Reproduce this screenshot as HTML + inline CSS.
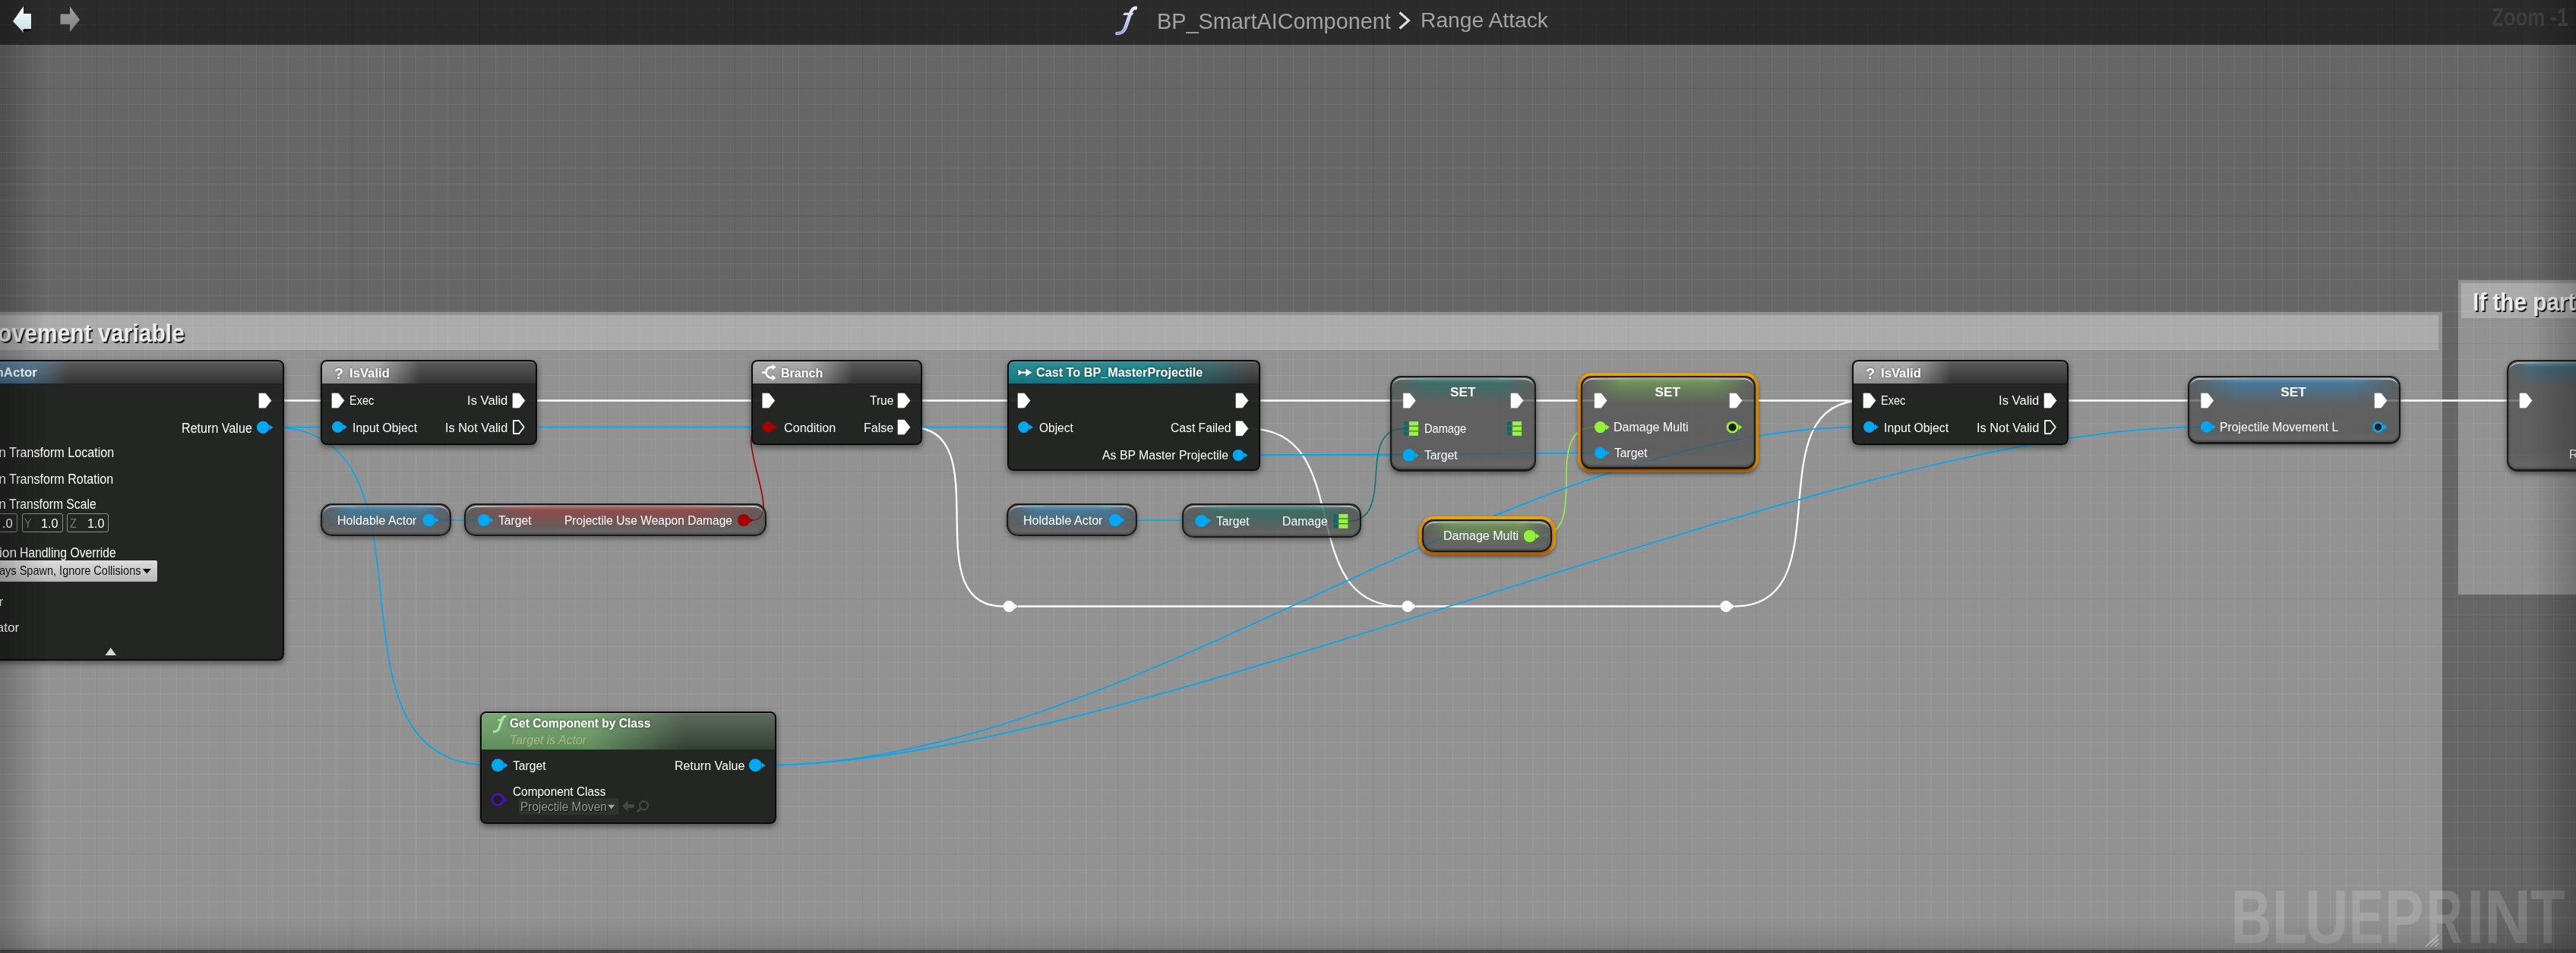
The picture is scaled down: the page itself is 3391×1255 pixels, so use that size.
<!DOCTYPE html><html><head><meta charset="utf-8"><style>*{box-sizing:border-box}
html,body{margin:0;padding:0}
body{width:3391px;height:1255px;overflow:hidden;position:relative;background:#666;font-family:"Liberation Sans",sans-serif;color:#fff}
.layer{position:absolute;left:0;top:0;overflow:visible}
.t{position:absolute;white-space:nowrap}
#txt{position:absolute;left:0;top:0;width:3391px;height:1255px;will-change:transform}
#grid{position:absolute;left:0;top:0;width:3391px;height:1255px;
background-image:
 linear-gradient(to right, rgba(0,0,0,.16) 1px, transparent 1px),
 linear-gradient(to bottom, rgba(0,0,0,.16) 1px, transparent 1px),
 linear-gradient(to right, rgba(255,255,255,.06) 1px, transparent 1px),
 linear-gradient(to bottom, rgba(255,255,255,.06) 1px, transparent 1px);
background-size:168px 168px,168px 168px,21px 21px,21px 21px;
background-position:127px 0,0 116px,1px 0,0 11px;}
#vig{position:absolute;left:0;top:0;width:3391px;height:1255px;
background:
 linear-gradient(to right, rgba(0,0,0,.22), rgba(0,0,0,0) 60px),
 linear-gradient(to left, rgba(0,0,0,.22), rgba(0,0,0,0) 60px),
 linear-gradient(to top, rgba(0,0,0,.28) 0, rgba(0,0,0,.28) 5px, rgba(0,0,0,.12) 6px, rgba(0,0,0,0) 45px);}
#hdr{position:absolute;left:0;top:0;width:3391px;height:59px;background:rgba(0,0,0,.58)}
.cmt{position:absolute;background:rgba(255,255,255,.29)}
.cmth{position:absolute;background:rgba(255,255,255,.23)}
.dn{position:absolute;background:rgba(31,33,31,.96);border:2px solid #0b0b0b;border-radius:8px;box-shadow:0 3px 8px rgba(0,0,0,.5)}
.dh{position:absolute;border-radius:6px 6px 0 0}
.dg{position:absolute;border-radius:6px 6px 0 0;background:linear-gradient(to bottom, rgba(255,255,255,.28) 0, rgba(255,255,255,.10) 2px, rgba(255,255,255,.05) 45%, rgba(0,0,0,.08) 100%)}
.vn{position:absolute;background:linear-gradient(to bottom, rgba(74,74,74,.7) 0, rgba(74,74,74,.7) 85%, rgba(88,88,88,.72) 100%);border:2px solid #1a1a1a;border-bottom-width:3px;box-shadow:0 3px 7px rgba(0,0,0,.45), inset 0 -2px 3px rgba(0,0,0,.3)}
.vg{position:absolute}
.pn{position:absolute;background:linear-gradient(to bottom, rgba(70,70,70,.7) 0, rgba(74,74,74,.7) 70%, rgba(92,92,92,.72) 100%);border:2px solid #1a1a1a;box-shadow:0 3px 6px rgba(0,0,0,.4), inset 0 -2px 3px rgba(0,0,0,.3)}
.hl{position:absolute;border-top:2px solid rgba(255,255,255,.7);-webkit-mask-image:linear-gradient(to right, rgba(0,0,0,1) 0, rgba(0,0,0,.5) 12%, rgba(0,0,0,.15) 30%, rgba(0,0,0,.15) 70%, rgba(0,0,0,.5) 88%, rgba(0,0,0,1) 100%)}
.pg{position:absolute;-webkit-mask-image:linear-gradient(to right, rgba(0,0,0,0) 0, rgba(0,0,0,1) 22%, rgba(0,0,0,1) 78%, rgba(0,0,0,0) 100%)}
.sel{position:absolute;border:4.5px solid #eb9400;border-top-color:#f2a800;border-bottom-color:#e37800;box-shadow:0 2px 5px rgba(0,0,0,.35)}
.vbox{position:absolute;border:1.5px solid #8c8c8c;border-radius:3px}
.dd{position:absolute;background:linear-gradient(to bottom,#dcdcdc,#b9b9b9);border-radius:2px}
.cdd{position:absolute;background:rgba(255,255,255,.06);border-radius:3px}
</style></head><body>
<div id="grid"></div>
<div class="cmt" style="left:0;top:411px;width:3215px;height:840px"></div>
<div class="cmth" style="left:0;top:415px;width:3210px;height:46px"></div>
<div class="cmt" style="left:3236px;top:369px;width:200px;height:414px"></div>
<div class="cmth" style="left:3240px;top:373px;width:200px;height:46px"></div>

<svg class="layer" width="3391" height="1255" viewBox="0 0 3391 1255"><line x1="357" y1="527.5" x2="437" y2="527.5" stroke="#fff" stroke-width="2.3"/><line x1="691" y1="527.5" x2="1003.8" y2="527.5" stroke="#fff" stroke-width="2.3"/><line x1="1198" y1="527.5" x2="1340" y2="527.5" stroke="#fff" stroke-width="2.3"/><line x1="1643" y1="527.5" x2="1847.4" y2="527.5" stroke="#fff" stroke-width="2.3"/><line x1="2004" y1="527.5" x2="2099.2" y2="527.5" stroke="#fff" stroke-width="2.3"/><line x1="2292.5" y1="527.5" x2="2438" y2="527.5" stroke="#fff" stroke-width="2.3"/><line x1="2707" y1="527.5" x2="2897.7" y2="527.5" stroke="#fff" stroke-width="2.3"/><line x1="3142.5" y1="527.5" x2="3317" y2="527.5" stroke="#fff" stroke-width="2.3"/><path d="M1198.4,562.5 C1317.9,562.5 1201.3,798.5 1320.8,798.5" fill="none" stroke="#ffffff" stroke-width="2.3" opacity="1.0"/><line x1="1339.6" y1="798.5" x2="1845.6" y2="798.5" stroke="#fff" stroke-width="2.3"/><path d="M1643.0,564.3 C1788.6,564.3 1700.0,798.5 1845.6,798.5" fill="none" stroke="#ffffff" stroke-width="2.3" opacity="1.0"/><line x1="1864" y1="798.5" x2="2264.6" y2="798.5" stroke="#fff" stroke-width="2.3"/><path d="M2283.4,798.5 C2430.3,798.5 2306.1,527.5 2453.0,527.5" fill="none" stroke="#ffffff" stroke-width="2.3" opacity="1.0"/><line x1="356" y1="562.5" x2="1340" y2="562.5" stroke="#00a8f3" stroke-width="1.7"/><path d="M356.0,562.5 C601.4,562.5 401.4,1007.8 646.8,1007.8" fill="none" stroke="#00a8f3" stroke-width="1.7" opacity="1.0"/><line x1="576" y1="685" x2="629" y2="685" stroke="#00a8f3" stroke-width="1.7"/><path d="M990.0,685.0 C1035.4,685.0 958.4,562.5 1003.8,562.5" fill="none" stroke="#a50000" stroke-width="1.6" opacity="1.0"/><line x1="1642" y1="599.4" x2="1847" y2="599.4" stroke="#00a8f3" stroke-width="1.7"/><path d="M1642.0,599.4 C1795.3,599.4 1945.7,596.4 2099.0,596.4" fill="none" stroke="#00a8f3" stroke-width="1.7" opacity="1.0"/><line x1="1478" y1="685" x2="1573.5" y2="685" stroke="#00a8f3" stroke-width="1.7"/><path d="M1774.3,686.5 C1839.5,686.5 1782.8,564.5 1848.0,564.5" fill="none" stroke="#0b7a72" stroke-width="1.7" opacity="1.0"/><path d="M2024.7,706.0 C2097.3,706.0 2026.4,562.6 2099.0,562.6" fill="none" stroke="#93f23c" stroke-width="1.6" opacity="1.0"/><path d="M1005.7,1007.8 C1487.5,1007.8 1971.2,562.3 2453.0,562.3" fill="none" stroke="#00a8f3" stroke-width="1.7" opacity="1.0"/><path d="M1005.7,1007.8 C1487.5,1007.8 2414.2,562.3 2896.0,562.3" fill="none" stroke="#00a8f3" stroke-width="1.7" opacity="1.0"/></svg>
<div class="dn" style="left:-40px;top:474px;width:413.5px;height:395.70000000000005px"></div><div class="dh" style="left:-38px;top:476px;width:409.5px;height:29px;background:linear-gradient(to right, rgba(80,130,170,.75) 0px, rgba(80,130,170,.75) 72px, rgba(60,60,60,0) 130px), linear-gradient(to bottom,#454545,#383838)"></div><div class="dg" style="left:-38px;top:476px;width:409.5px;height:29px"></div><div class="vbox" style="left:-20px;top:676px;width:42.7px;height:25px"></div><div class="vbox" style="left:29.1px;top:676px;width:53.800000000000004px;height:25px"></div><div class="vbox" style="left:88.3px;top:676px;width:54.7px;height:25px"></div><div class="dd" style="left:-20px;top:738px;width:227px;height:28px"></div><div class="dn" style="left:422px;top:474px;width:285px;height:112.39999999999998px"></div><div class="dh" style="left:424px;top:476px;width:281px;height:29px;background:linear-gradient(to right, rgba(175,175,175,.85) 0px, rgba(175,175,175,.85) 71px, rgba(60,60,60,0) 129px), linear-gradient(to bottom,#454545,#383838)"></div><div class="dg" style="left:424px;top:476px;width:281px;height:29px"></div><div class="dn" style="left:2438px;top:474px;width:285px;height:112.39999999999998px"></div><div class="dh" style="left:2440px;top:476px;width:281px;height:29px;background:linear-gradient(to right, rgba(175,175,175,.85) 0px, rgba(175,175,175,.85) 71px, rgba(60,60,60,0) 129px), linear-gradient(to bottom,#454545,#383838)"></div><div class="dg" style="left:2440px;top:476px;width:281px;height:29px"></div><div class="dn" style="left:989px;top:474px;width:225px;height:112.39999999999998px"></div><div class="dh" style="left:991px;top:476px;width:221px;height:29px;background:linear-gradient(to right, rgba(175,175,175,.85) 0px, rgba(175,175,175,.85) 73px, rgba(60,60,60,0) 132px), linear-gradient(to bottom,#454545,#383838)"></div><div class="dg" style="left:991px;top:476px;width:221px;height:29px"></div><div class="dn" style="left:1325.5px;top:474px;width:333.0px;height:145.60000000000002px"></div><div class="dh" style="left:1327.5px;top:476px;width:329.0px;height:29px;background:linear-gradient(to right, rgba(20,130,140,.95) 0px, rgba(20,130,140,.95) 176px, rgba(60,60,60,0) 320px), linear-gradient(to bottom,#454545,#383838)"></div><div class="dg" style="left:1327.5px;top:476px;width:329.0px;height:29px"></div><div class="vn" style="left:1829.5px;top:495.3px;width:192.9000000000001px;height:126.19999999999999px;border-radius:14px"></div><div class="pg" style="left:1831.5px;top:497.3px;width:188.9000000000001px;height:36px;border-radius:12px 12px 0 0;background:linear-gradient(to bottom, rgba(120,174,168,0.60) 0, rgba(30,120,110,0.55) 22%, rgba(30,120,110,0.30) 55%, rgba(30,120,110,0) 100%)"></div><div class="hl" style="left:1832.5px;top:497.8px;width:186.9000000000001px;height:18px;border-radius:12px 12px 0 0"></div><div class="sel" style="left:2076.9px;top:490.8px;width:238.19999999999982px;height:131.49999999999994px;border-radius:18px"></div><div class="vn" style="left:2081.4px;top:495.3px;width:229.19999999999982px;height:122.49999999999994px;border-radius:14px"></div><div class="pg" style="left:2083.4px;top:497.3px;width:225.19999999999982px;height:36px;border-radius:12px 12px 0 0;background:linear-gradient(to bottom, rgba(174,210,150,0.60) 0, rgba(120,180,80,0.55) 22%, rgba(120,180,80,0.30) 55%, rgba(120,180,80,0) 100%)"></div><div class="hl" style="left:2084.4px;top:497.8px;width:223.19999999999982px;height:18px;border-radius:12px 12px 0 0"></div><div class="vn" style="left:2880px;top:495.3px;width:280px;height:89.69999999999999px;border-radius:14px"></div><div class="pg" style="left:2882px;top:497.3px;width:276px;height:36px;border-radius:12px 12px 0 0;background:linear-gradient(to bottom, rgba(132,186,222,0.60) 0, rgba(50,140,200,0.55) 22%, rgba(50,140,200,0.30) 55%, rgba(50,140,200,0) 100%)"></div><div class="hl" style="left:2883px;top:497.8px;width:274px;height:18px;border-radius:12px 12px 0 0"></div><div class="vn" style="left:3299.6px;top:474.3px;width:150.4000000000001px;height:146.7px;border-radius:14px"></div><div class="pg" style="left:3301.6px;top:476.3px;width:146.4000000000001px;height:36px;border-radius:12px 12px 0 0;background:linear-gradient(to bottom, rgba(126,168,186,0.60) 0, rgba(40,110,140,0.55) 22%, rgba(40,110,140,0.30) 55%, rgba(40,110,140,0) 100%)"></div><div class="hl" style="left:3302.6px;top:476.8px;width:144.4000000000001px;height:18px;border-radius:12px 12px 0 0"></div><div class="pn" style="left:422px;top:663.2px;width:172.20000000000005px;height:43.09999999999991px;border-radius:15px"></div><div class="pg" style="left:424px;top:665.2px;width:168.20000000000005px;height:34.5px;border-radius:13px 13px 0 0;background:linear-gradient(to bottom, rgba(132,186,222,0.60) 0, rgba(50,140,200,0.55) 22%, rgba(50,140,200,0.30) 55%, rgba(50,140,200,0) 100%)"></div><div class="hl" style="left:425px;top:665.7px;width:166.20000000000005px;height:17px;border-radius:13px 13px 0 0"></div><div class="pn" style="left:610.8px;top:663.2px;width:397.80000000000007px;height:43.09999999999991px;border-radius:15px"></div><div class="pg" style="left:612.8px;top:665.2px;width:393.80000000000007px;height:34.5px;border-radius:13px 13px 0 0;background:linear-gradient(to bottom, rgba(210,138,138,0.60) 0, rgba(180,60,60,0.55) 22%, rgba(180,60,60,0.30) 55%, rgba(180,60,60,0) 100%)"></div><div class="hl" style="left:613.8px;top:665.7px;width:391.80000000000007px;height:17px;border-radius:13px 13px 0 0"></div><div class="pn" style="left:1325.1px;top:663.3px;width:172.10000000000014px;height:43.10000000000002px;border-radius:15px"></div><div class="pg" style="left:1327.1px;top:665.3px;width:168.10000000000014px;height:34.5px;border-radius:13px 13px 0 0;background:linear-gradient(to bottom, rgba(132,186,222,0.60) 0, rgba(50,140,200,0.55) 22%, rgba(50,140,200,0.30) 55%, rgba(50,140,200,0) 100%)"></div><div class="hl" style="left:1328.1px;top:665.8px;width:166.10000000000014px;height:17px;border-radius:13px 13px 0 0"></div><div class="pn" style="left:1556px;top:663.3px;width:236.4000000000001px;height:45.200000000000045px;border-radius:15px"></div><div class="pg" style="left:1558px;top:665.3px;width:232.4000000000001px;height:36.2px;border-radius:13px 13px 0 0;background:linear-gradient(to bottom, rgba(120,174,168,0.60) 0, rgba(30,120,110,0.55) 22%, rgba(30,120,110,0.30) 55%, rgba(30,120,110,0) 100%)"></div><div class="hl" style="left:1559px;top:665.8px;width:230.4000000000001px;height:17px;border-radius:13px 13px 0 0"></div><div class="sel" style="left:1867.5px;top:679.8px;width:180px;height:51.5px;border-radius:19.5px"></div><div class="pn" style="left:1872px;top:684.3px;width:171px;height:42.5px;border-radius:15px"></div><div class="pg" style="left:1874px;top:686.3px;width:167px;height:34.0px;border-radius:13px 13px 0 0;background:linear-gradient(to bottom, rgba(174,210,150,0.60) 0, rgba(120,180,80,0.55) 22%, rgba(120,180,80,0.30) 55%, rgba(120,180,80,0) 100%)"></div><div class="hl" style="left:1875px;top:686.8px;width:165px;height:17px;border-radius:13px 13px 0 0"></div><div class="dn" style="left:632.3px;top:936.6px;width:389.4000000000001px;height:148.69999999999993px"></div><div class="dh" style="left:634.3px;top:938.6px;width:385.4000000000001px;height:48.4px;background:linear-gradient(to right, rgba(110,160,105,.9) 0px, rgba(110,160,105,.9) 146px, rgba(60,60,60,0) 265px), linear-gradient(to bottom,#4a5a48,#36443a)"></div><div class="dg" style="left:634.3px;top:938.6px;width:385.4000000000001px;height:48.4px"></div><div class="cdd" style="left:683.3px;top:1051.3px;width:130.3px;height:22px"></div>
<svg class="layer" width="3391" height="1255" viewBox="0 0 3391 1255"><defs><filter id="sh" x="-50%" y="-50%" width="200%" height="200%"><feDropShadow dx="0" dy="0" stdDeviation="1" flood-color="#000" flood-opacity=".8"/></filter></defs><path d="M341.0,518.1 L349.5,518.1 L357.0,527.6 L349.5,537.1 L341.0,537.1 Z" fill="#fff" stroke="#fff" stroke-width="0.6" stroke-linejoin="round"/><circle cx="346.2" cy="562.8" r="8.2" fill="#00a8f3"/><path d="M354.5,559.2 L359.3,562.8 L354.5,566.4 Z" fill="#00a8f3"/><path d="M187.7,749 L199,749 L193.3,755.4 Z" fill="#111"/><path d="M138.5,863 L153,863 L145.75,853 Z" fill="#d8d8d8"/><path d="M437.0,518.0 L445.5,518.0 L453.0,527.5 L445.5,537.0 L437.0,537.0 Z" fill="#fff" stroke="#fff" stroke-width="0.6" stroke-linejoin="round"/><circle cx="444.5" cy="562.3" r="7.5" fill="#00a8f3"/><path d="M452.0,558.7 L456.8,562.3 L452.0,565.9 Z" fill="#00a8f3"/><path d="M675.0,518.0 L683.5,518.0 L691.0,527.5 L683.5,537.0 L675.0,537.0 Z" fill="#fff" stroke="#fff" stroke-width="0.6" stroke-linejoin="round"/><path d="M676.0,554.0 L683.2,554.0 L689.8,562.5 L683.2,571.0 L676.0,571.0 Z" fill="none" stroke="#fff" stroke-width="1.8" stroke-linejoin="round"/><path d="M2453.0,518.0 L2461.5,518.0 L2469.0,527.5 L2461.5,537.0 L2453.0,537.0 Z" fill="#fff" stroke="#fff" stroke-width="0.6" stroke-linejoin="round"/><circle cx="2460.5" cy="562.3" r="7.5" fill="#00a8f3"/><path d="M2468.0,558.7 L2472.8,562.3 L2468.0,565.9 Z" fill="#00a8f3"/><path d="M2691.0,518.0 L2699.5,518.0 L2707.0,527.5 L2699.5,537.0 L2691.0,537.0 Z" fill="#fff" stroke="#fff" stroke-width="0.6" stroke-linejoin="round"/><path d="M2692.0,554.0 L2699.2,554.0 L2705.8,562.5 L2699.2,571.0 L2692.0,571.0 Z" fill="none" stroke="#fff" stroke-width="1.8" stroke-linejoin="round"/><path d="M1003.8,518.0 L1012.3,518.0 L1019.8,527.5 L1012.3,537.0 L1003.8,537.0 Z" fill="#fff" stroke="#fff" stroke-width="0.6" stroke-linejoin="round"/><circle cx="1011.3" cy="562.5" r="7.5" fill="#a50000"/><path d="M1018.8,558.9 L1023.6,562.5 L1018.8,566.1 Z" fill="#a50000"/><path d="M1182.0,518.0 L1190.5,518.0 L1198.0,527.5 L1190.5,537.0 L1182.0,537.0 Z" fill="#fff" stroke="#fff" stroke-width="0.6" stroke-linejoin="round"/><path d="M1182.0,553.0 L1190.5,553.0 L1198.0,562.5 L1190.5,572.0 L1182.0,572.0 Z" fill="#fff" stroke="#fff" stroke-width="0.6" stroke-linejoin="round"/><path d="M1340.0,518.0 L1348.5,518.0 L1356.0,527.5 L1348.5,537.0 L1340.0,537.0 Z" fill="#fff" stroke="#fff" stroke-width="0.6" stroke-linejoin="round"/><path d="M1627.0,518.0 L1635.5,518.0 L1643.0,527.5 L1635.5,537.0 L1627.0,537.0 Z" fill="#fff" stroke="#fff" stroke-width="0.6" stroke-linejoin="round"/><circle cx="1347.7" cy="562.5" r="7.5" fill="#00a8f3"/><path d="M1355.2,558.9 L1360.0,562.5 L1355.2,566.1 Z" fill="#00a8f3"/><path d="M1627.0,554.8 L1635.5,554.8 L1643.0,564.3 L1635.5,573.8 L1627.0,573.8 Z" fill="#fff" stroke="#fff" stroke-width="0.6" stroke-linejoin="round"/><circle cx="1630.1" cy="599.4" r="7.5" fill="#00a8f3"/><path d="M1637.6,595.8 L1642.4,599.4 L1637.6,603.0 Z" fill="#00a8f3"/><path d="M1847.4,518.1 L1855.9,518.1 L1863.4,527.6 L1855.9,537.1 L1847.4,537.1 Z" fill="#fff" stroke="#fff" stroke-width="0.6" stroke-linejoin="round"/><path d="M1989.0,518.1 L1997.5,518.1 L2005.0,527.6 L1997.5,537.1 L1989.0,537.1 Z" fill="#fff" stroke="#fff" stroke-width="0.6" stroke-linejoin="round"/><rect x="1848.0" y="555.0" width="5.5" height="5.4" fill="#0c6a66"/><rect x="1855.0" y="555.0" width="12" height="5.4" fill="#94f53c"/><rect x="1848.0" y="561.7" width="5.5" height="5.4" fill="#0c6a66"/><rect x="1855.0" y="561.7" width="12" height="5.4" fill="#94f53c"/><rect x="1848.0" y="568.4" width="5.5" height="5.4" fill="#0c6a66"/><rect x="1855.0" y="568.4" width="12" height="5.4" fill="#94f53c"/><rect x="1984.0" y="555.0" width="5.5" height="5.4" fill="#0c6a66"/><rect x="1991.0" y="555.0" width="12" height="5.4" fill="#94f53c"/><rect x="1984.0" y="561.7" width="5.5" height="5.4" fill="#0c6a66"/><rect x="1991.0" y="561.7" width="12" height="5.4" fill="#94f53c"/><rect x="1984.0" y="568.4" width="5.5" height="5.4" fill="#0c6a66"/><rect x="1991.0" y="568.4" width="12" height="5.4" fill="#94f53c"/><circle cx="1854.8" cy="599.5" r="8.2" fill="#00a8f3"/><path d="M1863.1,595.9 L1867.9,599.5 L1863.1,603.1 Z" fill="#00a8f3"/><path d="M2099.2,518.1 L2107.7,518.1 L2115.2,527.6 L2107.7,537.1 L2099.2,537.1 Z" fill="#fff" stroke="#fff" stroke-width="0.6" stroke-linejoin="round"/><path d="M2277.0,518.1 L2285.5,518.1 L2293.0,527.6 L2285.5,537.1 L2277.0,537.1 Z" fill="#fff" stroke="#fff" stroke-width="0.6" stroke-linejoin="round"/><circle cx="2106.5" cy="562.6" r="7.5" fill="#93f23c"/><path d="M2114.0,559.0 L2118.8,562.6 L2114.0,566.2 Z" fill="#93f23c"/><circle cx="2280.5" cy="562.6" r="6.5" fill="#1e1e1e" stroke="#93f23c" stroke-width="2.8"/><path d="M2288.5,559.0 L2293.3,562.6 L2288.5,566.2 Z" fill="#93f23c"/><circle cx="2106.5" cy="596.4" r="7.5" fill="#00a8f3"/><path d="M2114.0,592.8 L2118.8,596.4 L2114.0,600.0 Z" fill="#00a8f3"/><path d="M2897.7,518.0 L2906.2,518.0 L2913.7,527.5 L2906.2,537.0 L2897.7,537.0 Z" fill="#fff" stroke="#fff" stroke-width="0.6" stroke-linejoin="round"/><path d="M3126.0,518.0 L3134.5,518.0 L3142.0,527.5 L3134.5,537.0 L3126.0,537.0 Z" fill="#fff" stroke="#fff" stroke-width="0.6" stroke-linejoin="round"/><circle cx="2904.5" cy="562.3" r="7.5" fill="#00a8f3"/><path d="M2912.0,558.7 L2916.8,562.3 L2912.0,565.9 Z" fill="#00a8f3"/><circle cx="3130.5" cy="562.3" r="6.0" fill="#1e1e1e" stroke="#00a8f3" stroke-width="2.8"/><path d="M3138.0,558.7 L3142.8,562.3 L3138.0,565.9 Z" fill="#00a8f3"/><path d="M3317.0,518.0 L3325.5,518.0 L3333.0,527.5 L3325.5,537.0 L3317.0,537.0 Z" fill="#fff" stroke="#fff" stroke-width="0.6" stroke-linejoin="round"/><circle cx="564.8" cy="685.0" r="8.0" fill="#00a8f3"/><path d="M572.8,681.4 L577.6,685.0 L572.8,688.6 Z" fill="#00a8f3"/><circle cx="637.0" cy="685.0" r="8.0" fill="#00a8f3"/><path d="M645.0,681.4 L649.8,685.0 L645.0,688.6 Z" fill="#00a8f3"/><circle cx="979.0" cy="685.0" r="8.0" fill="#a50000"/><path d="M987.0,681.4 L991.8,685.0 L987.0,688.6 Z" fill="#a50000"/><circle cx="1468.0" cy="685.0" r="8.0" fill="#00a8f3"/><path d="M1476.0,681.4 L1480.8,685.0 L1476.0,688.6 Z" fill="#00a8f3"/><circle cx="1581.5" cy="686.0" r="8.0" fill="#00a8f3"/><path d="M1589.5,682.4 L1594.3,686.0 L1589.5,689.6 Z" fill="#00a8f3"/><rect x="1755.4" y="677.0" width="5.5" height="5.4" fill="#0c6a66"/><rect x="1762.4" y="677.0" width="12" height="5.4" fill="#94f53c"/><rect x="1755.4" y="683.7" width="5.5" height="5.4" fill="#0c6a66"/><rect x="1762.4" y="683.7" width="12" height="5.4" fill="#94f53c"/><rect x="1755.4" y="690.4" width="5.5" height="5.4" fill="#0c6a66"/><rect x="1762.4" y="690.4" width="12" height="5.4" fill="#94f53c"/><circle cx="2013.8" cy="706.0" r="8.0" fill="#93f23c"/><path d="M2021.8,702.4 L2026.6,706.0 L2021.8,709.6 Z" fill="#93f23c"/><circle cx="655.3" cy="1007.8" r="8.5" fill="#00a8f3"/><path d="M663.8,1004.2 L668.6,1007.8 L663.8,1011.4 Z" fill="#00a8f3"/><circle cx="994.3" cy="1007.8" r="8.5" fill="#00a8f3"/><path d="M1002.8,1004.2 L1007.6,1007.8 L1002.8,1011.4 Z" fill="#00a8f3"/><circle cx="655.3" cy="1053.0" r="7.0" fill="#1e1e1e" stroke="#4a10b8" stroke-width="2.8"/><path d="M663.8,1049.4 L668.6,1053.0 L663.8,1056.6 Z" fill="#4a10b8"/><path d="M800.2,1059.7 L809.2,1059.7 L804.7,1065.6 Z" fill="#a0a0a0"/><g fill="none" stroke="#fff" stroke-width="2.6" stroke-linecap="butt"><path d="M1003,490.5 L1008.5,490.5"/><path d="M1019,483.4 L1015.5,483.4 A7.1,7.1 0 0 0 1015.5,497.6 L1019,497.6"/></g><path d="M1016.5,479.6 L1021.5,483.4 L1016.5,487.2 Z M1016.5,493.8 L1021.5,497.6 L1016.5,501.4 Z" fill="#fff"/><g filter="url(#sh)"><path d="M1340.5,486.8 L1346.3,490.6 L1340.5,494.4 Z M1345.5,489.4 L1351,489.4 L1351,491.8 L1345.5,491.8 Z M1350.3,485.4 L1358.5,490.6 L1350.3,495.8 Z" fill="#f4f4f4"/></g><path d="M649.4,962.6 C652.5,962.6 654.5,962.3 656,958 L659.3,948.8 L655.3,948.8 L656,947.4 L659.8,947.4 C661.6,942.8 663,942.2 666,942.3 L665.8,944.6 C663.8,944.4 662.9,945.4 662,947.4 L663,947.4 L662.3,948.8 L661.6,948.8 L658.3,958.5 C656.6,963.6 653.5,964.6 649.2,964.6 Z" fill="#a6ef9c" stroke="#a6ef9c" stroke-width="0.9"/><path d="M819.2,1061.5 L826.6,1054.3 L826.6,1059 L834.7,1059 L834.7,1064 L826.6,1064 L826.6,1068.8 Z" fill="#464646"/><circle cx="847.6" cy="1060.8" r="5.6" fill="none" stroke="#464646" stroke-width="2.2"/><path d="M843.8,1064.6 L839.6,1068.4" stroke="#464646" stroke-width="2.8" stroke-linecap="round"/><circle cx="1328.2" cy="798.5" r="7.6" fill="#fff"/><path d="M1335.6000000000001,794.9 L1339.6000000000001,798.5 L1335.6000000000001,802.1 Z" fill="#fff"/><circle cx="1853" cy="798.5" r="7.6" fill="#fff"/><path d="M1860.4,794.9 L1864.4,798.5 L1860.4,802.1 Z" fill="#fff"/><circle cx="2272" cy="798.5" r="7.6" fill="#fff"/><path d="M2279.4,794.9 L2283.4,798.5 L2279.4,802.1 Z" fill="#fff"/></svg>
<div id="txt"><span class='t' style='left:-49.50px;top:483.03px;font-family:"Liberation Sans", sans-serif;font-size:16.86px;font-weight:bold;font-style:normal;line-height:16.86px;color:#fff;'>SpawnActor</span><span class='t' style='left:239.38px;top:555.54px;font-family:"Liberation Sans", sans-serif;font-size:17.44px;font-weight:normal;font-style:normal;line-height:17.44px;color:#fff;transform:scaleX(0.9242);transform-origin:0 50%;'>Return Value</span><span class='t' style='left:-1.70px;top:588.44px;font-family:"Liberation Sans", sans-serif;font-size:17.44px;font-weight:normal;font-style:normal;line-height:17.44px;color:#fff;'>n</span><span class='t' style='left:12.00px;top:588.44px;font-family:"Liberation Sans", sans-serif;font-size:17.44px;font-weight:normal;font-style:normal;line-height:17.44px;color:#fff;transform:scaleX(0.9236);transform-origin:0 50%;'>Transform Location</span><span class='t' style='left:-1.70px;top:622.54px;font-family:"Liberation Sans", sans-serif;font-size:17.44px;font-weight:normal;font-style:normal;line-height:17.44px;color:#fff;'>n</span><span class='t' style='left:12.00px;top:622.54px;font-family:"Liberation Sans", sans-serif;font-size:17.44px;font-weight:normal;font-style:normal;line-height:17.44px;color:#fff;transform:scaleX(0.9229);transform-origin:0 50%;'>Transform Rotation</span><span class='t' style='left:-1.70px;top:656.14px;font-family:"Liberation Sans", sans-serif;font-size:17.44px;font-weight:normal;font-style:normal;line-height:17.44px;color:#fff;'>n</span><span class='t' style='left:12.00px;top:656.14px;font-family:"Liberation Sans", sans-serif;font-size:17.44px;font-weight:normal;font-style:normal;line-height:17.44px;color:#fff;transform:scaleX(0.9007);transform-origin:0 50%;'>Transform Scale</span><span class='t' style='left:3.05px;top:680.56px;font-family:"Liberation Sans", sans-serif;font-size:17.30px;font-weight:normal;font-style:normal;line-height:17.30px;color:#fff;transform:scaleX(0.9530);transform-origin:0 50%;'>.0</span><span class='t' style='left:32.30px;top:680.56px;font-family:"Liberation Sans", sans-serif;font-size:17.30px;font-weight:normal;font-style:normal;line-height:17.30px;color:#777;transform:scaleX(0.8167);transform-origin:0 50%;'>Y</span><span class='t' style='left:54.26px;top:680.56px;font-family:"Liberation Sans", sans-serif;font-size:17.30px;font-weight:normal;font-style:normal;line-height:17.30px;color:#fff;transform:scaleX(0.9370);transform-origin:0 50%;'>1.0</span><span class='t' style='left:92.40px;top:680.56px;font-family:"Liberation Sans", sans-serif;font-size:17.30px;font-weight:normal;font-style:normal;line-height:17.30px;color:#777;transform:scaleX(0.8364);transform-origin:0 50%;'>Z</span><span class='t' style='left:114.57px;top:680.56px;font-family:"Liberation Sans", sans-serif;font-size:17.30px;font-weight:normal;font-style:normal;line-height:17.30px;color:#fff;transform:scaleX(0.9281);transform-origin:0 50%;'>1.0</span><span class='t' style='left:-0.99px;top:720.14px;font-family:"Liberation Sans", sans-serif;font-size:17.44px;font-weight:normal;font-style:normal;line-height:17.44px;color:#fff;transform:scaleX(0.9920);transform-origin:0 50%;'>ion</span><span class='t' style='left:25.70px;top:720.14px;font-family:"Liberation Sans", sans-serif;font-size:17.44px;font-weight:normal;font-style:normal;line-height:17.44px;color:#fff;transform:scaleX(0.9018);transform-origin:0 50%;'>Handling Override</span><span class='t' style='left:-1.20px;top:743.08px;font-family:"Liberation Sans", sans-serif;font-size:17.15px;font-weight:normal;font-style:normal;line-height:17.15px;color:#101010;transform:scaleX(0.8473);transform-origin:0 50%;'>ays Spawn, Ignore Collisions</span><span class='t' style='left:-46.28px;top:784.08px;font-family:"Liberation Sans", sans-serif;font-size:17.15px;font-weight:normal;font-style:normal;line-height:17.15px;color:#fff;'>Owner</span><span class='t' style='left:-45.30px;top:818.08px;font-family:"Liberation Sans", sans-serif;font-size:17.15px;font-weight:normal;font-style:normal;line-height:17.15px;color:#fff;'>Instigator</span><span class='t' style='left:439.70px;top:482.47px;font-family:"Liberation Sans", sans-serif;font-size:20.35px;font-weight:bold;font-style:normal;line-height:20.35px;color:#fff;transform:scaleX(0.9750);transform-origin:0 50%;text-shadow:0 0 3px rgba(0,0,0,.5);'>?</span><span class='t' style='left:460.03px;top:482.68px;font-family:"Liberation Sans", sans-serif;font-size:17.15px;font-weight:bold;font-style:normal;line-height:17.15px;color:#fff;transform:scaleX(0.9728);transform-origin:0 50%;text-shadow:0 0 4px rgba(0,0,0,.45);'>IsValid</span><span class='t' style='left:459.94px;top:519.93px;font-family:"Liberation Sans", sans-serif;font-size:16.86px;font-weight:normal;font-style:normal;line-height:16.86px;color:#fff;transform:scaleX(0.8599);transform-origin:0 50%;'>Exec</span><span class='t' style='left:463.66px;top:555.63px;font-family:"Liberation Sans", sans-serif;font-size:16.86px;font-weight:normal;font-style:normal;line-height:16.86px;color:#fff;transform:scaleX(0.9366);transform-origin:0 50%;'>Input Object</span><span class='t' style='left:615.01px;top:519.93px;font-family:"Liberation Sans", sans-serif;font-size:16.86px;font-weight:normal;font-style:normal;line-height:16.86px;color:#fff;transform:scaleX(0.9875);transform-origin:0 50%;'>Is Valid</span><span class='t' style='left:586.03px;top:555.63px;font-family:"Liberation Sans", sans-serif;font-size:16.86px;font-weight:normal;font-style:normal;line-height:16.86px;color:#fff;transform:scaleX(0.9691);transform-origin:0 50%;'>Is Not Valid</span><span class='t' style='left:2455.70px;top:482.47px;font-family:"Liberation Sans", sans-serif;font-size:20.35px;font-weight:bold;font-style:normal;line-height:20.35px;color:#fff;transform:scaleX(0.9750);transform-origin:0 50%;text-shadow:0 0 3px rgba(0,0,0,.5);'>?</span><span class='t' style='left:2476.03px;top:482.68px;font-family:"Liberation Sans", sans-serif;font-size:17.15px;font-weight:bold;font-style:normal;line-height:17.15px;color:#fff;transform:scaleX(0.9728);transform-origin:0 50%;text-shadow:0 0 4px rgba(0,0,0,.45);'>IsValid</span><span class='t' style='left:2475.94px;top:519.93px;font-family:"Liberation Sans", sans-serif;font-size:16.86px;font-weight:normal;font-style:normal;line-height:16.86px;color:#fff;transform:scaleX(0.8599);transform-origin:0 50%;'>Exec</span><span class='t' style='left:2479.66px;top:555.63px;font-family:"Liberation Sans", sans-serif;font-size:16.86px;font-weight:normal;font-style:normal;line-height:16.86px;color:#fff;transform:scaleX(0.9366);transform-origin:0 50%;'>Input Object</span><span class='t' style='left:2631.01px;top:519.93px;font-family:"Liberation Sans", sans-serif;font-size:16.86px;font-weight:normal;font-style:normal;line-height:16.86px;color:#fff;transform:scaleX(0.9875);transform-origin:0 50%;'>Is Valid</span><span class='t' style='left:2602.03px;top:555.63px;font-family:"Liberation Sans", sans-serif;font-size:16.86px;font-weight:normal;font-style:normal;line-height:16.86px;color:#fff;transform:scaleX(0.9691);transform-origin:0 50%;'>Is Not Valid</span><span class='t' style='left:1027.86px;top:482.68px;font-family:"Liberation Sans", sans-serif;font-size:17.15px;font-weight:bold;font-style:normal;line-height:17.15px;color:#fff;transform:scaleX(0.9377);transform-origin:0 50%;text-shadow:0 0 4px rgba(0,0,0,.45);'>Branch</span><span class='t' style='left:1031.70px;top:555.63px;font-family:"Liberation Sans", sans-serif;font-size:16.86px;font-weight:normal;font-style:normal;line-height:16.86px;color:#fff;transform:scaleX(0.9597);transform-origin:0 50%;'>Condition</span><span class='t' style='left:1145.40px;top:519.93px;font-family:"Liberation Sans", sans-serif;font-size:16.86px;font-weight:normal;font-style:normal;line-height:16.86px;color:#fff;transform:scaleX(0.9209);transform-origin:0 50%;'>True</span><span class='t' style='left:1137.45px;top:555.63px;font-family:"Liberation Sans", sans-serif;font-size:16.86px;font-weight:normal;font-style:normal;line-height:16.86px;color:#fff;transform:scaleX(0.9536);transform-origin:0 50%;'>False</span><span class='t' style='left:1364.40px;top:482.93px;font-family:"Liberation Sans", sans-serif;font-size:16.86px;font-weight:bold;font-style:normal;line-height:16.86px;color:#fff;transform:scaleX(0.9608);transform-origin:0 50%;text-shadow:0 0 5px rgba(0,0,0,.5);'>Cast To BP_MasterProjectile</span><span class='t' style='left:1367.60px;top:555.63px;font-family:"Liberation Sans", sans-serif;font-size:16.86px;font-weight:normal;font-style:normal;line-height:16.86px;color:#fff;transform:scaleX(0.9176);transform-origin:0 50%;'>Object</span><span class='t' style='left:1541.40px;top:556.43px;font-family:"Liberation Sans", sans-serif;font-size:16.86px;font-weight:normal;font-style:normal;line-height:16.86px;color:#fff;transform:scaleX(0.9306);transform-origin:0 50%;'>Cast Failed</span><span class='t' style='left:1451.00px;top:592.23px;font-family:"Liberation Sans", sans-serif;font-size:16.86px;font-weight:normal;font-style:normal;line-height:16.86px;color:#fff;transform:scaleX(0.9394);transform-origin:0 50%;'>As BP Master Projectile</span><span class='t' style='left:1909.07px;top:507.68px;font-family:"Liberation Sans", sans-serif;font-size:17.15px;font-weight:bold;font-style:normal;line-height:17.15px;color:#fff;'>SET</span><span class='t' style='left:1874.63px;top:557.43px;font-family:"Liberation Sans", sans-serif;font-size:16.86px;font-weight:normal;font-style:normal;line-height:16.86px;color:#fff;transform:scaleX(0.8661);transform-origin:0 50%;'>Damage</span><span class='t' style='left:1874.80px;top:592.23px;font-family:"Liberation Sans", sans-serif;font-size:16.86px;font-weight:normal;font-style:normal;line-height:16.86px;color:#fff;transform:scaleX(0.9327);transform-origin:0 50%;'>Target</span><span class='t' style='left:2178.57px;top:507.68px;font-family:"Liberation Sans", sans-serif;font-size:17.15px;font-weight:bold;font-style:normal;line-height:17.15px;color:#fff;'>SET</span><span class='t' style='left:2124.35px;top:555.43px;font-family:"Liberation Sans", sans-serif;font-size:16.86px;font-weight:normal;font-style:normal;line-height:16.86px;color:#fff;transform:scaleX(0.9486);transform-origin:0 50%;'>Damage Multi</span><span class='t' style='left:2125.00px;top:589.43px;font-family:"Liberation Sans", sans-serif;font-size:16.86px;font-weight:normal;font-style:normal;line-height:16.86px;color:#fff;transform:scaleX(0.9327);transform-origin:0 50%;'>Target</span><span class='t' style='left:3002.27px;top:507.68px;font-family:"Liberation Sans", sans-serif;font-size:17.15px;font-weight:bold;font-style:normal;line-height:17.15px;color:#fff;'>SET</span><span class='t' style='left:2922.06px;top:555.23px;font-family:"Liberation Sans", sans-serif;font-size:16.86px;font-weight:normal;font-style:normal;line-height:16.86px;color:#fff;transform:scaleX(0.9370);transform-origin:0 50%;'>Projectile Movement L</span><span class='t' style='left:3381.70px;top:590.93px;font-family:"Liberation Sans", sans-serif;font-size:16.86px;font-weight:normal;font-style:normal;line-height:16.86px;color:#fff;'>R</span><span class='t' style='left:444.05px;top:677.73px;font-family:"Liberation Sans", sans-serif;font-size:16.86px;font-weight:normal;font-style:normal;line-height:16.86px;color:#fff;transform:scaleX(0.9521);transform-origin:0 50%;'>Holdable Actor</span><span class='t' style='left:656.30px;top:677.73px;font-family:"Liberation Sans", sans-serif;font-size:16.86px;font-weight:normal;font-style:normal;line-height:16.86px;color:#fff;transform:scaleX(0.9327);transform-origin:0 50%;'>Target</span><span class='t' style='left:743.48px;top:677.73px;font-family:"Liberation Sans", sans-serif;font-size:16.86px;font-weight:normal;font-style:normal;line-height:16.86px;color:#fff;transform:scaleX(0.9223);transform-origin:0 50%;'>Projectile Use Weapon Damage</span><span class='t' style='left:1346.85px;top:677.73px;font-family:"Liberation Sans", sans-serif;font-size:16.86px;font-weight:normal;font-style:normal;line-height:16.86px;color:#fff;transform:scaleX(0.9521);transform-origin:0 50%;'>Holdable Actor</span><span class='t' style='left:1601.00px;top:678.73px;font-family:"Liberation Sans", sans-serif;font-size:16.86px;font-weight:normal;font-style:normal;line-height:16.86px;color:#fff;transform:scaleX(0.9327);transform-origin:0 50%;'>Target</span><span class='t' style='left:1688.06px;top:679.23px;font-family:"Liberation Sans", sans-serif;font-size:16.86px;font-weight:normal;font-style:normal;line-height:16.86px;color:#fff;transform:scaleX(0.9399);transform-origin:0 50%;'>Damage</span><span class='t' style='left:1900.05px;top:698.43px;font-family:"Liberation Sans", sans-serif;font-size:16.86px;font-weight:normal;font-style:normal;line-height:16.86px;color:#fff;transform:scaleX(0.9535);transform-origin:0 50%;'>Damage Multi</span><span class='t' style='left:671.40px;top:944.93px;font-family:"Liberation Sans", sans-serif;font-size:16.86px;font-weight:bold;font-style:normal;line-height:16.86px;color:#fff;transform:scaleX(0.9246);transform-origin:0 50%;text-shadow:0 0 5px rgba(0,0,0,.45);'>Get Component by Class</span><span class='t' style='left:671.36px;top:967.43px;font-family:"Liberation Sans", sans-serif;font-size:16.86px;font-weight:normal;font-style:italic;line-height:16.86px;color:#a9b97c;transform:scaleX(0.9405);transform-origin:0 50%;'>Target is Actor</span><span class='t' style='left:674.60px;top:1000.73px;font-family:"Liberation Sans", sans-serif;font-size:16.86px;font-weight:normal;font-style:normal;line-height:16.86px;color:#fff;transform:scaleX(0.9327);transform-origin:0 50%;'>Target</span><span class='t' style='left:887.85px;top:1000.73px;font-family:"Liberation Sans", sans-serif;font-size:16.86px;font-weight:normal;font-style:normal;line-height:16.86px;color:#fff;transform:scaleX(0.9501);transform-origin:0 50%;'>Return Value</span><span class='t' style='left:674.60px;top:1034.73px;font-family:"Liberation Sans", sans-serif;font-size:16.86px;font-weight:normal;font-style:normal;line-height:16.86px;color:#fff;transform:scaleX(0.9134);transform-origin:0 50%;'>Component Class</span><span class='t' style='left:685.04px;top:1055.17px;font-family:"Liberation Sans", sans-serif;font-size:15.99px;font-weight:normal;font-style:normal;line-height:15.99px;color:#9a9a9a;transform:scaleX(0.9633);transform-origin:0 50%;text-shadow:1px 1px 1px #000;'>Projectile Moven</span></div>
<span class="t" style="will-change:transform;left:-3px;top:422px;font-weight:bold;font-size:33px;line-height:33px;color:#eee;text-shadow:2px 2px 0 #1a1a1a;transform:scaleX(0.912);transform-origin:left 50%">ovement variable</span>
<span class="t" style="will-change:transform;left:3254.7px;top:381px;font-weight:bold;font-size:33px;line-height:33px;color:#eee;text-shadow:2px 2px 0 #1a1a1a;transform:scaleX(0.9);transform-origin:left 50%">If the part</span>
<svg class="layer" width="3391" height="1255" viewBox="0 0 3391 1255"><g stroke="rgba(255,255,255,.55)" stroke-width="1.2"><path d="M3193,1246.5 L3210.5,1231"/><path d="M3199,1246.5 L3210.5,1236.5"/><path d="M3205,1246.5 L3210.5,1242"/></g></svg>
<span class="t" style="left:2936.6px;top:1157.3px;font-weight:bold;font-size:100px;line-height:100px;color:rgba(255,255,255,.16);transform:scaleX(0.737);transform-origin:left 50%">B</span>
<span class="t" style="left:2990.8px;top:1157.3px;font-weight:bold;font-size:100px;line-height:100px;color:rgba(255,255,255,.16);transform:scaleX(0.755);transform-origin:left 50%">L</span>
<span class="t" style="left:3034.4px;top:1157.3px;font-weight:bold;font-size:100px;line-height:100px;color:rgba(255,255,255,.16);transform:scaleX(0.797);transform-origin:left 50%">U</span>
<span class="t" style="left:3092.2px;top:1157.3px;font-weight:bold;font-size:100px;line-height:100px;color:rgba(255,255,255,.16);transform:scaleX(0.686);transform-origin:left 50%">E</span>
<span class="t" style="left:3139.4px;top:1157.3px;font-weight:bold;font-size:100px;line-height:100px;color:rgba(255,255,255,.16);transform:scaleX(0.772);transform-origin:left 50%">P</span>
<span class="t" style="left:3194.3px;top:1157.3px;font-weight:bold;font-size:100px;line-height:100px;color:rgba(255,255,255,.16);transform:scaleX(0.660);transform-origin:left 50%">R</span>
<span class="t" style="left:3246.7px;top:1157.3px;font-weight:bold;font-size:100px;line-height:100px;color:rgba(255,255,255,.16);transform:scaleX(0.831);transform-origin:left 50%">I</span>
<span class="t" style="left:3269.5px;top:1157.3px;font-weight:bold;font-size:100px;line-height:100px;color:rgba(255,255,255,.16);transform:scaleX(0.857);transform-origin:left 50%">N</span>
<span class="t" style="left:3331.1px;top:1157.3px;font-weight:bold;font-size:100px;line-height:100px;color:rgba(255,255,255,.16);transform:scaleX(0.747);transform-origin:left 50%">T</span>
<div id="vig"></div>
<div id="hdr"></div>
<svg class="layer" width="3391" height="60" viewBox="0 0 3391 60">
<defs>
<linearGradient id="ga" x1="0" y1="0" x2="0" y2="1"><stop offset="0" stop-color="#ffffff"/><stop offset="1" stop-color="#c8dde6"/></linearGradient>
<linearGradient id="gb" x1="0" y1="0" x2="0" y2="1"><stop offset="0" stop-color="#a0a0a0"/><stop offset="1" stop-color="#808080"/></linearGradient>
<linearGradient id="gf" x1="0" y1="0" x2="0" y2="1"><stop offset="0" stop-color="#f4f6ff"/><stop offset="1" stop-color="#8c9ee0"/></linearGradient>
</defs>
<path d="M17,28 L31,8 L31,18 L41,18 L41,38 L31,38 L31,43 Z" fill="url(#ga)"/>
<path d="M29,39 L41,39 L41,40 L31,42 Z" fill="#000" opacity=".7"/>
<path d="M105,26 L92,8.5 L92,18.5 L79.5,18.5 L79.5,32 L92,32 L92,42 Z" fill="url(#gb)"/>
</svg>


<svg class="layer" width="3391" height="60" viewBox="0 0 3391 60"><path d="M1842.5,16.5 L1854.5,27 L1842.5,37.5" fill="none" stroke="#e0e0e0" stroke-width="3"/><g transform="translate(1468.7,8.7) scale(1.66)"><path d="M0.2,20.3 C3.3,20.3 5.3,20 6.8,15.7 L10.1,6.5 L6.1,6.5 L6.8,5.1 L10.6,5.1 C12.4,0.5 13.8,-0.1 16.8,0 L16.6,2.3 C14.6,2.1 13.7,3.1 12.8,5.1 L13.8,5.1 L13.1,6.5 L12.4,6.5 L9.1,16.2 C7.4,21.3 4.3,22.3 0,22.3 Z" fill="url(#gf)" stroke="#dfe6ff" stroke-width="0.5"/></g></svg>



<div id="txt2" style="position:absolute;left:0;top:0;width:3391px;height:60px;will-change:transform"><span class='t' style='left:1522.90px;top:13.92px;font-family:"Liberation Sans", sans-serif;font-size:28.92px;font-weight:normal;font-style:normal;line-height:28.92px;color:#a3a3a3;transform:scaleX(0.9979);transform-origin:0 50%;'>BP_SmartAIComponent</span><span class='t' style='left:1869.71px;top:12.11px;font-family:"Liberation Sans", sans-serif;font-size:28.34px;font-weight:normal;font-style:normal;line-height:28.34px;color:#a3a3a3;transform:scaleX(0.9964);transform-origin:0 50%;'>Range Attack</span><span class='t' style='left:3279.70px;top:6.69px;font-family:"Liberation Sans", sans-serif;font-size:32.85px;font-weight:bold;font-style:normal;line-height:32.85px;color:#3d3d3d;transform:scaleX(0.7873);transform-origin:0 50%;'>Zoom -1</span></div>
</body></html>
